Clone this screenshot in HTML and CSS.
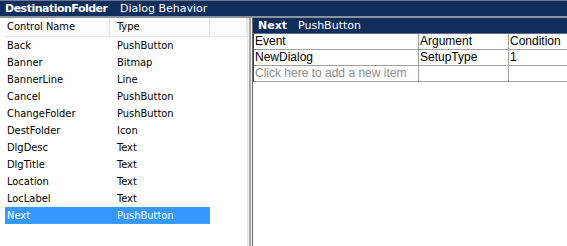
FILE: index.html
```html
<!DOCTYPE html>
<html lang="en">
  <head>
    <meta charset="UTF-8" />
    <title>Dialog Behavior</title>
    <link rel="stylesheet" href="styles.css">
  </head>
  <body>
    <div class="titlebar">
      <span class="title_main">DestinationFolder</span>
      <span class="title_sub">Dialog Behavior</span>
    </div>
    <div class="main">
      <div class="controls">
        <div class="row head">
          <span class="cell">Control Name</span>
          <span class="cell">Type</span>
          <span class="cell"></span>
        </div>
        <div class="row"><span class="cell">Back</span><span class="cell">PushButton</span></div>
        <div class="row"><span class="cell">Banner</span><span class="cell">Bitmap</span></div>
        <div class="row"><span class="cell">BannerLine</span><span class="cell">Line</span></div>
        <div class="row"><span class="cell">Cancel</span><span class="cell">PushButton</span></div>
        <div class="row"><span class="cell">ChangeFolder</span><span class="cell">PushButton</span></div>
        <div class="row"><span class="cell">DestFolder</span><span class="cell">Icon</span></div>
        <div class="row"><span class="cell">DlgDesc</span><span class="cell">Text</span></div>
        <div class="row"><span class="cell">DlgTitle</span><span class="cell">Text</span></div>
        <div class="row"><span class="cell">Location</span><span class="cell">Text</span></div>
        <div class="row"><span class="cell">LocLabel</span><span class="cell">Text</span></div>
        <div class="row selected"><span class="cell">Next</span><span class="cell">PushButton</span></div>
      </div>
      <div class="splitter"></div>
      <div class="behavior">
        <div class="behavior_head">
          <span class="title_main">Next</span>
          <span class="title_sub">PushButton</span>
        </div>
        <div class="grid">
          <span class="gcell">Event</span>
          <span class="gcell">Argument</span>
          <span class="gcell">Condition</span>
          <span class="gcell">NewDialog</span>
          <span class="gcell">SetupType</span>
          <span class="gcell">1</span>
          <span class="gcell hint">Click here to add a new item</span>
          <span class="gcell"></span>
          <span class="gcell"></span>
        </div>
      </div>
    </div>
  </body>
</html>
```
FILE: styles.css
```css
*{
    margin: 0;
    padding: 0;
    box-sizing: border-box;
}
body{
    width: 567px;
    height: 246px;
    overflow: hidden;
    background-color: #ffffff;
    font-family: "DejaVu Sans", sans-serif;
    font-size: 11px;
    color: #000000;
}
.titlebar{
    height: 18px;
    background-color: #0e2e5e;
    border-top: 1px solid #6d7788;
    border-bottom: 2px solid #8c929c;
    color: #ffffff;
    display: flex;
    align-items: center;
    padding-left: 5px;
    white-space: nowrap;
}
.title_main{
    font-weight: bold;
    font-size: 11px;
    letter-spacing: -0.5px;
    width: 115px;
}
.title_sub{
    font-size: 11px;
}
.main{
    display: flex;
    height: 228px;
}
.controls{
    width: 247px;
    flex-shrink: 0;
    padding-left: 5px;
    font-family: "DejaVu Sans Condensed", "DejaVu Sans", sans-serif;
}
.row{
    display: grid;
    grid-template-columns: 105px 100px 1fr;
    height: 17px;
    align-items: center;
    width: 205px;
}
.row .cell{
    padding-left: 2px;
    line-height: 17px;
}
.row .cell:nth-child(2){
    padding-left: 7px;
}
.head{
    width: 242px;
    height: 19px;
    grid-template-columns: 105px 100px 1fr;
    background-color: #fcfcfc;
    border-bottom: 1px solid #ececec;
}
.head .cell{
    border-right: 1px solid #e6e6e6;
    height: 18px;
    line-height: 18px;
}
.selected{
    background-color: #3399ff;
    color: #ffffff;
    outline: 1px dotted #e87a1c;
    outline-offset: -1px;
}
.splitter{
    width: 6px;
    flex-shrink: 0;
    background: linear-gradient(to right, #e6e6e6 0 1px, #f4f4f4 1px 2px, #a8a8a8 2px 4px, #f0f0f0 4px 5px, #6e6e6e 5px 6px);
}
.behavior{
    flex: 1;
    min-width: 0;
    overflow: hidden;
    font-family: "Liberation Sans", Arial, sans-serif;
}
.behavior_head{
    height: 16px;
    background-color: #0e2e5e;
    color: #ffffff;
    display: flex;
    align-items: center;
    padding-left: 5px;
    border-bottom: 1px solid #5d6a80;
    font-family: "DejaVu Sans", sans-serif;
}
.behavior_head .title_main{
    letter-spacing: 0;
    width: 40px;
}
.grid{
    display: grid;
    grid-template-columns: 165px 90px 80px;
    grid-auto-rows: 16px;
    border-left: 1px solid #404040;
}
.gcell{
    border-right: 1px solid #a0a0a0;
    border-bottom: 1px solid #a0a0a0;
    padding-left: 1px;
    line-height: 15px;
    font-size: 12px;
    white-space: nowrap;
}
.hint{
    color: #8c8c8c;
}
```
